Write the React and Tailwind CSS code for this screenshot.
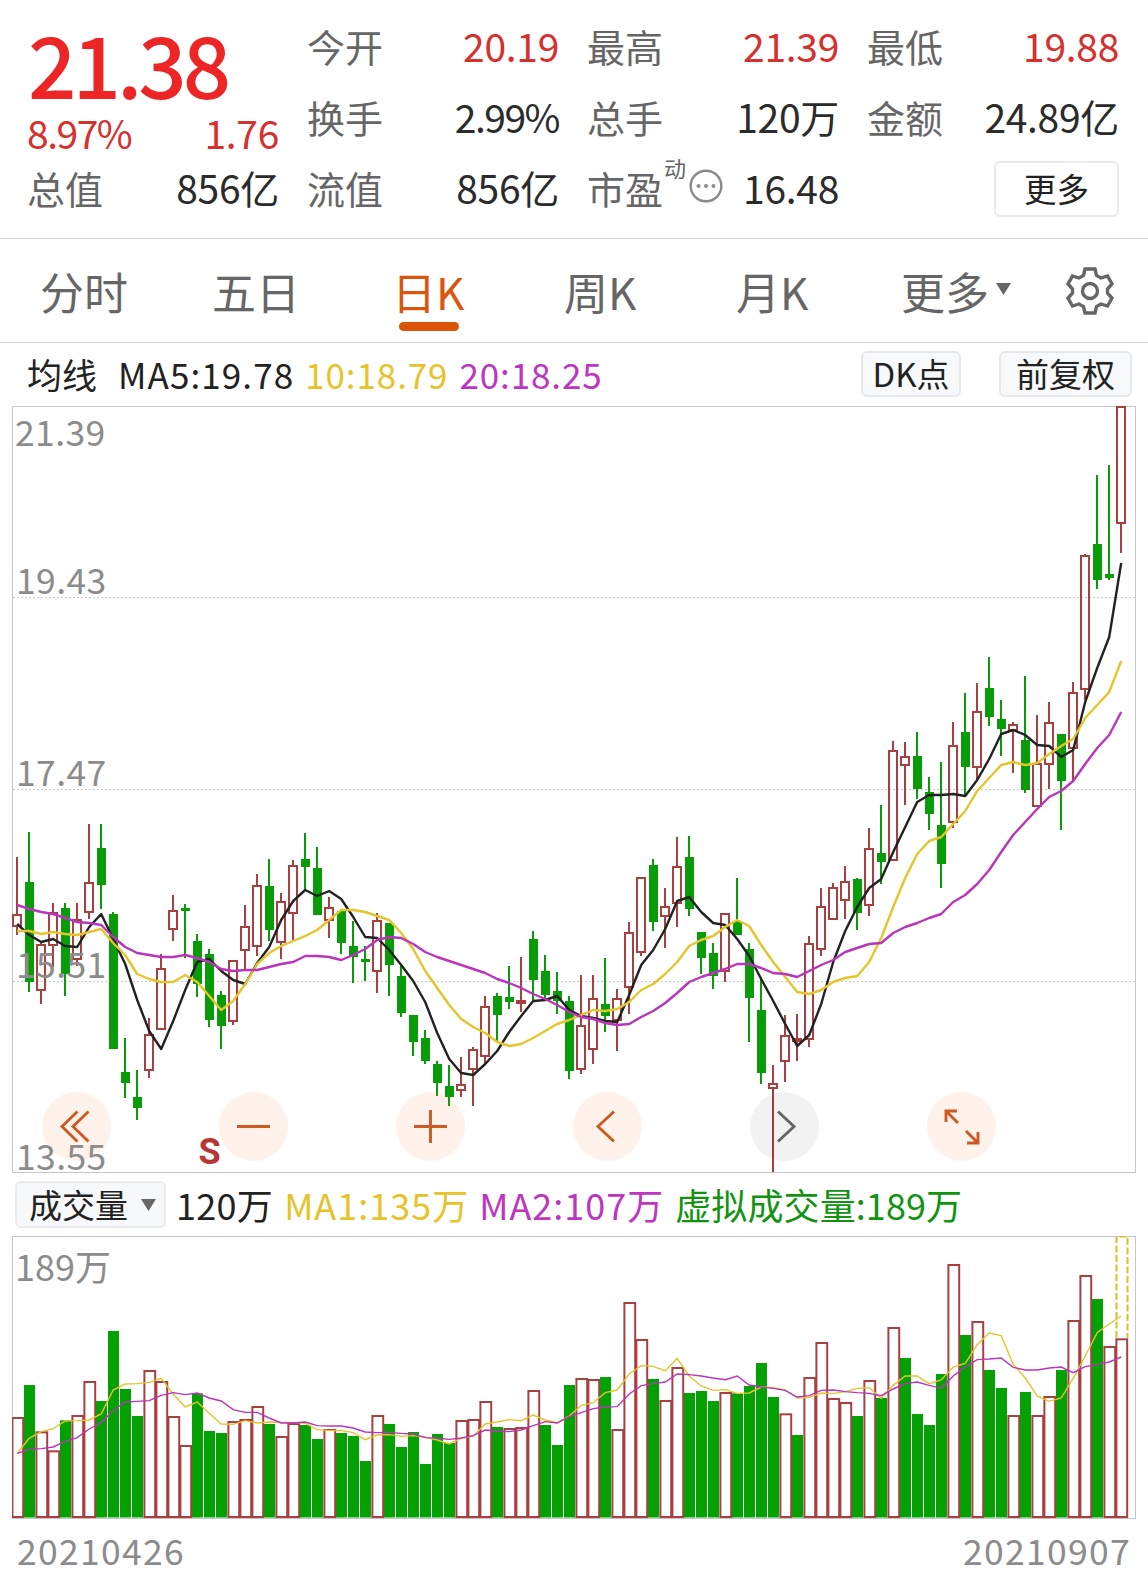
import clsx from 'clsx'

const RED = '#a83f41'
const GREEN = '#089d08'
const STEP = 12

// up/down, high, body top, body bottom, low
const candles = [
  ['r', 857, 914, 927, 935], ['g', 832, 882, 982, 992], ['r', 943, 944, 991, 1004], ['r', 903, 912, 946, 967],
  ['g', 903, 908, 974, 996], ['r', 903, 919, 960, 966], ['r', 824, 882, 913, 919], ['g', 824, 848, 885, 909],
  ['g', 912, 914, 1049, 1049], ['g', 1038, 1072, 1083, 1098], ['g', 1070, 1097, 1108, 1120], ['r', 1018, 1034, 1071, 1078],
  ['r', 954, 968, 1030, 1030], ['r', 895, 910, 930, 941], ['g', 904, 908, 911, 958], ['g', 934, 941, 984, 997],
  ['g', 949, 954, 1020, 1027], ['g', 991, 995, 1026, 1049], ['r', 960, 960, 1022, 1025], ['r', 905, 926, 951, 970],
  ['r', 874, 885, 947, 956], ['g', 859, 886, 930, 941], ['r', 893, 901, 943, 959], ['r', 860, 865, 914, 940],
  ['g', 833, 859, 867, 889], ['g', 847, 868, 915, 915], ['r', 897, 907, 921, 938], ['g', 910, 911, 943, 954],
  ['g', 921, 946, 957, 983], ['g', 946, 959, 962, 981], ['r', 913, 920, 972, 993], ['g', 923, 923, 965, 996],
  ['g', 964, 976, 1013, 1017], ['g', 1015, 1015, 1042, 1056], ['g', 1030, 1038, 1061, 1064], ['g', 1061, 1064, 1083, 1096],
  ['g', 1065, 1086, 1097, 1106], ['r', 1057, 1084, 1091, 1097], ['r', 1047, 1049, 1070, 1106], ['r', 996, 1006, 1057, 1063],
  ['g', 993, 996, 1015, 1042], ['g', 966, 997, 1002, 1009], ['r', 957, 1000, 1004, 1012], ['g', 931, 939, 980, 1000],
  ['g', 955, 971, 995, 1000], ['g', 972, 991, 1001, 1014], ['g', 996, 1001, 1071, 1079], ['r', 975, 1025, 1070, 1074],
  ['r', 975, 998, 1050, 1064], ['g', 958, 1004, 1016, 1032], ['r', 989, 998, 1021, 1051], ['r', 922, 932, 988, 1014],
  ['r', 877, 877, 953, 956], ['g', 859, 865, 922, 931], ['r', 888, 906, 917, 948], ['r', 837, 866, 904, 927],
  ['g', 836, 857, 909, 916], ['g', 932, 932, 958, 974], ['g', 943, 953, 976, 989], ['r', 913, 913, 972, 982],
  ['g', 878, 922, 935, 935], ['g', 943, 949, 998, 1042], ['g', 977, 1010, 1073, 1084], ['r', 1065, 1083, 1089, 1172],
  ['r', 1015, 1035, 1062, 1082], ['r', 1014, 1038, 1042, 1061], ['r', 936, 943, 1040, 1047], ['r', 888, 906, 950, 956],
  ['r', 883, 887, 920, 920], ['r', 866, 881, 901, 919], ['g', 878, 879, 913, 930], ['r', 828, 848, 906, 916],
  ['g', 805, 853, 862, 884], ['r', 741, 750, 861, 861], ['r', 742, 756, 766, 805], ['g', 732, 756, 789, 799],
  ['g', 777, 792, 814, 830], ['g', 762, 825, 864, 888], ['r', 722, 745, 823, 828], ['g', 693, 732, 767, 795],
  ['r', 683, 711, 768, 779], ['g', 657, 688, 717, 726], ['g', 700, 719, 729, 756], ['r', 722, 724, 731, 773],
  ['g', 676, 740, 790, 793], ['r', 715, 763, 807, 807], ['r', 702, 722, 765, 789], ['g', 734, 734, 781, 830],
  ['r', 682, 692, 749, 781], ['r', 554, 555, 690, 700], ['g', 475, 544, 580, 589], ['g', 465, 574, 578, 580],
  ['r', 406, 406, 524, 553],
]

const ma5 = [
  924, 935, 942, 939, 946, 947, 927, 914, 939, 964, 1000, 1031, 1049, 1021, 990, 962, 959, 971, 980, 984, 963, 947, 920, 901,
  890, 896, 891, 899, 917, 937, 938, 950, 965, 981, 1002, 1033, 1059, 1073, 1075, 1064, 1051, 1032, 1016, 1001, 1000, 996,
  1010, 1016, 1018, 1021, 1022, 995, 965, 950, 929, 901, 897, 912, 923, 925, 939, 956, 979, 1001, 1024, 1046, 1035, 1004,
  962, 931, 907, 888, 879, 852, 827, 802, 795, 795, 794, 796, 780, 759, 734, 730, 735, 745, 746, 757, 750, 702, 668, 637, 563,
]
const ma10 = [
  931, 931, 934, 932, 934, 935, 932, 929, 943, 955, 974, 979, 982, 982, 975, 982, 996, 1010, 1001, 984, 964, 953, 946, 941,
  936, 930, 920, 910, 910, 912, 916, 920, 933, 949, 971, 988, 1005, 1019, 1027, 1033, 1042, 1046, 1044, 1038, 1031, 1024,
  1020, 1015, 1010, 1011, 1009, 1002, 990, 984, 974, 962, 946, 940, 936, 927, 920, 926, 945, 962, 977, 992, 994, 990, 982,
  978, 976, 962, 938, 907, 878, 854, 841, 837, 824, 811, 791, 778, 765, 762, 765, 763, 754, 746, 739, 718, 705, 692, 661,
]
const ma20 = [
  905, 909, 912, 914, 918, 922, 923, 925, 937, 947, 953, 955, 957, 957, 955, 958, 962, 969, 971, 970, 970, 967, 964, 962,
  956, 956, 957, 960, 955, 949, 940, 937, 938, 944, 952, 957, 961, 965, 969, 973, 979, 983, 988, 994, 999, 1005, 1012, 1017,
  1019, 1023, 1025, 1024, 1017, 1011, 1003, 993, 982, 977, 973, 969, 964, 964, 968, 973, 974, 977, 971, 965, 960, 952, 948,
  944, 943, 933, 927, 923, 918, 914, 902, 895, 884, 870, 852, 835, 822, 809, 797, 791, 781, 764, 748, 735, 712,
]

// r = hollow bar, g = solid bar; y of the top edge, three units to a pixel
const volumes =
  'r741 g645 r784 r841 g751 r735 r633 g693 g483 g657 g738 r600 r633 r738 r825 g670 g783 g789 r753 r747 r708 g762 r798 r759 g765 g807 r777 g789 g798 g873 r735 g762 g831 g786 g882 g792 g819 r750 r747 r693 g771 r774 r771 r660 g765 g825 g645 r624 r627 g621 r777 r396 r507 g627 r690 r591 g669 g663 g693 r666 g670 g648 g579 g681 r730 g795 r621 r516 r684 r696 g738 r630 g684 r471 g564 g732 g765 g612 r282 g495 r453 g600 g654 r735 g666 r735 r678 g600 r450 r315 g387 r528 r505'
    .split(' ')
    .map(v => [v[0], Number(v.slice(1)) / 3])

const volMa1 = [
  850, 805, 785, 776, 753, 752, 750, 732, 660, 642, 641, 637, 625, 672, 711, 696, 730, 762, 763, 752, 759, 756, 757, 757, 760,
  779, 782, 781, 788, 809, 795, 794, 799, 797, 801, 810, 822, 805, 798, 762, 756, 749, 752, 735, 750, 758, 738, 706, 698, 668,
  660, 612, 587, 589, 603, 565, 618, 648, 661, 659, 670, 669, 651, 653, 660, 684, 682, 669, 671, 665, 655, 653, 685, 646, 618,
  618, 641, 630, 591, 580, 524, 489, 497, 583, 624, 678, 694, 684, 625, 558, 488, 462, 438,
].map(v => v / 3)
const volMa2 = [
  850, 838, 836, 831, 814, 803, 777, 757, 722, 696, 694, 692, 676, 668, 674, 669, 684, 693, 719, 727, 727, 744, 759, 759, 756,
  767, 768, 768, 774, 786, 788, 787, 790, 792, 803, 804, 808, 804, 797, 780, 783, 785, 780, 767, 755, 759, 740, 728, 716, 711,
  710, 672, 647, 641, 636, 612, 614, 618, 624, 629, 618, 645, 651, 655, 661, 681, 677, 661, 660, 665, 668, 670, 677, 657, 641,
  636, 646, 655, 618, 591, 569, 567, 564, 592, 600, 600, 594, 591, 608, 590, 583, 576, 561,
].map(v => v / 3)

const toPoints = ys => ys.map((y, i) => `${17.2 + i * STEP},${y}`).join(' ')

function Stat({ label, value, up }) {
  return (
    <div className="flex h-[71px] items-center justify-between">
      <span className="text-[38px] text-[#666]">{label}</span>
      <span
        className={clsx(
          'text-[39px]',
          value.endsWith('%') ? 'tracking-[-1.5px]' : 'tracking-[-0.3px]',
          up ? 'text-[#d6302f]' : 'text-[#2b2b2b]',
        )}
      >
        {value}
      </span>
    </div>
  )
}

function Quote() {
  return (
    <header className="grid h-[239px] grid-cols-[252px_252px_252px_252px] gap-x-[28px] border-b border-[#d6d6d6] pt-[10px] pl-[27px]">
      <div className="flex flex-col">
        <div className="flex h-[103px] items-center pl-px text-[85px] font-medium tracking-[-4px] text-[#ee2525]">21.38</div>
        <div className="flex h-[39px] items-center justify-between text-[39px] text-[#d6302f]">
          <span className="tracking-[-1.5px]">8.97%</span>
          <span className="tracking-[-0.3px]">1.76</span>
        </div>
        <Stat label="总值" value="856亿" />
      </div>
      <div>
        <Stat label="今开" value="20.19" up />
        <Stat label="换手" value="2.99%" />
        <Stat label="流值" value="856亿" />
      </div>
      <div>
        <Stat label="最高" value="21.39" up />
        <Stat label="总手" value="120万" />
        <div className="flex h-[71px] items-center">
          <span className="text-[38px] text-[#666]">市盈</span>
          <span className="mb-[42px] ml-px text-[22px] text-[#666]">动</span>
          <svg className="mb-[3px] ml-[3px] size-[34px]" viewBox="0 0 34 34">
            <circle cx="17" cy="17" r="15.300" fill="none" stroke="#8a8a8a" strokeWidth="2.400" />
            <circle cx="9.500" cy="17" r="2" fill="#8a8a8a" />
            <circle cx="17" cy="17" r="2" fill="#8a8a8a" />
            <circle cx="24.500" cy="17" r="2" fill="#8a8a8a" />
          </svg>
          <span className="ml-auto text-[39px] tracking-[-0.3px] text-[#2b2b2b]">16.48</span>
        </div>
      </div>
      <div>
        <Stat label="最低" value="19.88" up />
        <Stat label="金额" value="24.89亿" />
        <div className="flex h-[73px] items-center justify-end">
          <button className="flex h-14 w-[125px] items-center justify-center rounded-md border-2 border-[#e8eaec] text-[32.500px] text-[#222]">
            更多
          </button>
        </div>
      </div>
    </header>
  )
}

function Tabs() {
  const tab = 'flex h-[103px] items-center text-[44px] text-[#666]'
  return (
    <nav className="flex h-[104px] border-b border-[#d6d6d6] pl-10">
      <div className={clsx(tab, 'w-[172px]')}>分时</div>
      <div className={clsx(tab, 'w-[180px]')}>五日</div>
      <div className="relative flex h-[103px] w-[172px] items-center text-[44px] text-[#d9560f]">
        日K
        <span className="absolute bottom-[11px] left-[7px] h-[9px] w-[60px] rounded-full bg-[#dd550a]" />
      </div>
      <div className={clsx(tab, 'w-[172px]')}>周K</div>
      <div className={clsx(tab, 'w-[165px]')}>月K</div>
      <div className={clsx(tab, 'w-[165px]')}>
        更多
        <svg className="mb-1 ml-[7px] h-3 w-[15px]" viewBox="0 0 15 12">
          <path d="M0 0H15L7.500 12Z" fill="#666" />
        </svg>
      </div>
      <svg className="mt-7 h-[48px] w-[48px]" viewBox="0 0 48 48" fill="none" stroke="#666" strokeWidth="3.400">
        <path d="M19 2H29L30.500 8.500L35 11L41.500 9L46 17L41.500 22V26L46 31L41.500 39L35 37L30.500 39.500L29 46H19L17.500 39.500L13 37L6.500 39L2 31L6.500 26V22L2 17L6.500 9L13 11L17.500 8.500Z" />
        <circle cx="24" cy="24" r="7.500" />
      </svg>
    </nav>
  )
}

function Averages() {
  const chip = 'mb-0.5 flex h-[46px] items-center justify-center rounded-md border-2 border-[#e6e9ec] bg-[#f7f9fa] text-[33px] text-[#222]'
  return (
    <div className="flex h-[63px] items-center pr-4 pl-[27px] text-[35px] whitespace-nowrap">
      <span className="mb-[3px] text-[#222]">均线</span>
      <span className="mb-[3px] ml-[21px] tracking-[1.1px] text-[#222]">MA5:19.78</span>
      <span className="mb-[3px] ml-[11px] tracking-[0.9px] text-[#e6c32a]">10:18.79</span>
      <span className="mb-[3px] ml-[11px] tracking-[0.9px] text-[#bd35c0]">20:18.25</span>
      <div className={clsx(chip, 'ml-auto w-[100px]')}>DK点</div>
      <div className={clsx(chip, 'ml-[38px] w-[133px]')}>前复权</div>
    </div>
  )
}

function Candle({ type, high, top, bottom, low, x }) {
  if (type === 'g') {
    return (
      <g fill={GREEN}>
        <rect x={x - 1} y={high} width="2" height={low - high} />
        <rect x={x - 4} y={top} width="9" height={bottom - top} />
      </g>
    )
  }
  return (
    <g fill={RED}>
      <rect x={x - 1} y={high} width="2" height={top - high} />
      <rect x={x - 1} y={bottom} width="2" height={low - bottom} />
      <rect x={x - 4} y={top + 1} width="8" height={bottom - top - 2} fill="none" stroke={RED} strokeWidth="2" />
    </g>
  )
}

const controls = [
  { id: 'first', icon: <path d="M35.500 19.500L20 34.500L35.500 49.500M46.500 19.500L31 34.500L46.500 49.500" /> },
  { id: 'minus', icon: <path d="M18 34.500H51" /> },
  { id: 'plus', icon: <path d="M18 34.500H51M34.500 18V51" /> },
  { id: 'prev', icon: <path d="M41 19.500L25 34.500L41 49.500" /> },
  { id: 'next', off: true, icon: <path d="M28 19.500L44 34.500L28 49.500" /> },
  { id: 'full', icon: <path d="M30 19H19V30M19 19L31 31M40 51H51V40M51 51L39 39" /> },
]

function PriceChart() {
  return (
    <div className="relative mx-3 h-[767px]">
      <svg className="block h-[767px] w-[1124px]" viewBox="12 406 1124 767">
        <rect x="12.500" y="406.500" width="1123" height="766" fill="none" stroke="#c6c6c6" />
        {[597.5, 789.5, 981.5].map(y => (
          <line key={y} x1="13" x2="1135" y1={y} y2={y} stroke="#ccc" strokeDasharray="2 2" />
        ))}
        {candles.map(([type, high, top, bottom, low], i) => (
          <Candle key={i} type={type} high={high} top={top} bottom={bottom} low={low} x={17 + i * STEP} />
        ))}
        <g fill="none" strokeWidth="2.400" strokeLinejoin="round">
          <polyline points={toPoints(ma5)} stroke="#222" />
          <polyline points={toPoints(ma10)} stroke="#e3c52c" />
          <polyline points={toPoints(ma20)} stroke="#b935bb" />
        </g>
        <g fill="#8c8c8c" fontSize="35.500" letterSpacing="0.400">
          <text x="15" y="446">21.39</text>
          <text x="16" y="594">19.43</text>
          <text x="16" y="786">17.47</text>
          <text x="16" y="978">15.51</text>
        </g>
        <text x="198.500" y="1164" fill="#b93434" fontSize="36" fontWeight="700" fontFamily="Roboto">S</text>
      </svg>
      <div className="absolute top-[685.500px] left-[30px] flex gap-[108px]">
        {controls.map(({ id, off, icon }) => (
          <button key={id} className={clsx('size-[69px] rounded-full', off ? 'bg-black/5' : 'bg-[#f26a21]/9')}>
            <svg className="size-[69px]" viewBox="0 0 69 69" fill="none" stroke={off ? '#666' : '#cc5a22'} strokeWidth="2.900">
              {icon}
            </svg>
          </button>
        ))}
      </div>
      <span className="absolute bottom-px left-1 text-[35.500px] leading-none tracking-[0.4px] text-[#8c8c8c]">13.55</span>
    </div>
  )
}

function VolumeBar() {
  return (
    <div className="flex h-[63px] items-center pl-[15px] text-[36px] whitespace-nowrap">
      <div className="flex h-[47px] w-[151px] items-center rounded-md border-2 border-[#e9ecee] bg-[#f6f8f9] pl-3 text-[33px] text-[#222]">
        成交量
        <svg className="ml-[13px] h-3 w-[15px]" viewBox="0 0 15 12">
          <path d="M0 0H15L7.500 12Z" fill="#666" />
        </svg>
      </div>
      <span className="mb-0.5 ml-[10px] tracking-[0.3px] text-[#222]">120万</span>
      <span className="mb-0.5 ml-[11px] tracking-[1px] text-[#e6c32a]">MA1:135万</span>
      <span className="mb-0.5 ml-[10px] tracking-[1px] text-[#bd35c0]">MA2:107万</span>
      <span className="mb-0.5 ml-[11px] tracking-[0.1px] text-[#129312]">虚拟成交量:189万</span>
    </div>
  )
}

function VolumeChart() {
  const base = 347.5
  return (
    <svg className="mx-3 block h-[283px] w-[1124px]" viewBox="12 66 1124 283">
      <rect x="12.500" y="66.500" width="1123" height="282" fill="none" stroke="#c6c6c6" />
      {volumes.map(([type, top], i) =>
        type === 'g' ? (
          <rect key={i} x={12 + i * STEP} y={top} width="11" height={base - top} fill="#04a104" />
        ) : (
          <rect key={i} x={12.4 + i * STEP} y={top + 1} width="10.800" height={base - top - 1.5} fill="#fff" stroke={RED} strokeWidth="2" />
        ),
      )}
      <path d="M1116.500 168V66.500H1127.500V168" fill="none" stroke="#d3c22e" strokeWidth="2" strokeDasharray="7 2.500" />
      <polyline points={toPoints(volMa1)} fill="none" stroke="#e3c52c" strokeWidth="1.400" />
      <polyline points={toPoints(volMa2)} fill="none" stroke="#b935bb" strokeWidth="1.400" />
      <text x="15" y="111" fill="#8c8c8c" fontSize="36">189万</text>
    </svg>
  )
}

export default function App() {
  return (
    <div className="h-[1582px] w-[1148px] overflow-hidden bg-white font-['Noto_Sans_CJK_SC',sans-serif] leading-none">
      <Quote />
      <Tabs />
      <Averages />
      <PriceChart />
      <VolumeBar />
      <VolumeChart />
      <footer className="flex h-[61px] items-center justify-between pr-[17px] pl-[17px] text-[35.500px] tracking-[1.3px] text-[#8c8c8c]">
        <span>20210426</span>
        <span>20210907</span>
      </footer>
    </div>
  )
}
